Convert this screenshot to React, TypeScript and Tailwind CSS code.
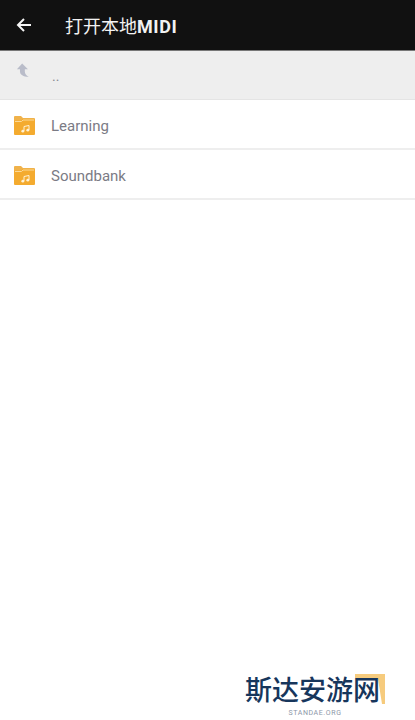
const FONT = '[font-family:Roboto,"Noto_Sans_CJK_SC",sans-serif]'

const FolderIcon = () => (
  <svg width="21" height="20" viewBox="0 0 21 20" className="shrink-0">
    <path d="M0 2a1 1 0 0 1 1-1h6l2 2h11a1 1 0 0 1 1 1v2H0z" fill="#f0b24a" />
    <path d="M0 5.5h7L8.5 4H20a1 1 0 0 1 1 1v14a1 1 0 0 1-1 1H1a1 1 0 0 1-1-1z" fill="#f4ab2f" />
    <path d="M1 6.5h6.5L9 5h11" fill="none" stroke="#fbd998" strokeWidth="1" />
    <path d="M10 16v-4.5l5-1V15" fill="none" stroke="#fff2d6" strokeWidth="1" />
    <circle cx="8.8" cy="16.2" r="1.4" fill="#fff2d6" />
    <circle cx="13.8" cy="15.2" r="1.4" fill="#fff2d6" />
  </svg>
)

const UpIcon = () => (
  <svg width="15" height="15" viewBox="0 0 17 17" className="shrink-0">
    <path d="M7 0.5 1 7h3.5v2.5c0 3.5 3.5 6 10 6C11.5 14 10 12 10 9.5V7h3.5z" fill="#b9bcc9" />
  </svg>
)

const Row = ({ name }: { name: string }) => (
  <div className="flex h-[50px] items-center border-b-2 border-[#eeeeee] bg-white pl-[13.5px] pt-[2px]">
    <FolderIcon />
    <span className="ml-[16.5px] mt-[2px] text-[15px] text-[#7b7b85]">{name}</span>
  </div>
)

export default function App() {
  return (
    <div className={`relative h-[720px] w-[415px] overflow-hidden bg-white ${FONT}`}>
      <header className="flex h-[51px] items-center border-b border-[#777] bg-[#111111] pl-4">
        <svg width="16" height="16" viewBox="0 0 16 16" className="shrink-0">
          <path d="M15 8H2M8 2 2 8l6 6" fill="none" stroke="#f5f5f5" strokeWidth="2" />
        </svg>
        <h1 className="ml-[33px] mt-[2px] text-[18px] font-normal text-[#f2f2f2]">
          打开本地<span className="font-bold tracking-[0.6px]">MIDI</span>
        </h1>
      </header>

      <div className="flex h-[49px] border-b border-[#e4e4e4] bg-[#eeeeee] pl-[16px]">
        <div className="pt-[12px]">
          <UpIcon />
        </div>
        <span className="ml-[21px] mt-[15px] text-[14px] text-[#8a8a92]">..</span>
      </div>

      <Row name="Learning" />
      <Row name="Soundbank" />

      <div className="absolute bottom-0 left-[245px] flex w-[140px] flex-col items-center">
        <div className="relative h-[31px] w-[140px]">
          <svg width="30" height="30" viewBox="0 0 30 30" className="absolute right-0 top-0">
            <path d="M0 0h30v30h-3L23 5H0z" fill="#f6cb7d" />
          </svg>
          <span className="absolute left-0 top-[-4px] whitespace-nowrap font-['Noto_Sans_CJK_SC',sans-serif] text-[27px] font-medium leading-[38px] text-[#17365c]">
            斯达安游网
          </span>
        </div>
        <span className="mb-[2px] mt-[4px] text-[7px] leading-[9px] tracking-[0.6px] text-[#8d97a8]">STANDAE.ORG</span>
      </div>
    </div>
  )
}
